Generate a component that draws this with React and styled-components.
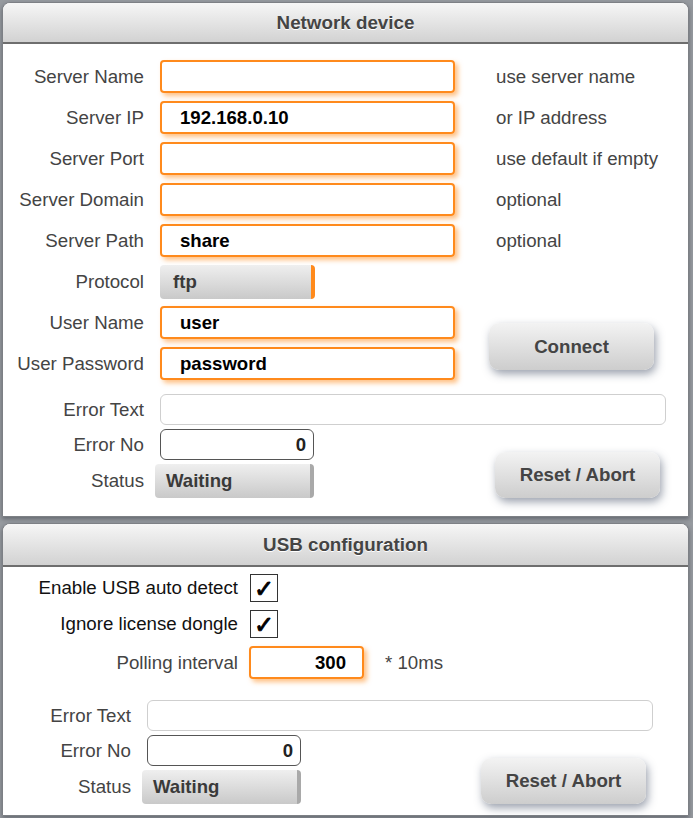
import React from 'react';
import styled, { createGlobalStyle } from 'styled-components';

const GlobalStyle = createGlobalStyle`
  html, body {
    margin: 0;
    padding: 0;
    background: #969a9f;
    font-family: "Liberation Sans", Arial, sans-serif;
  }
  * { box-sizing: border-box; }
`;

const Page = styled.div`
  width: 693px;
  height: 818px;
  padding: 2px 4px 0 2px;
  display: flex;
  flex-direction: column;
  gap: 6px;
  overflow: hidden;
`;

const Panel = styled.section`
  background: #fff;
  border: 1px solid #7d8085;
  border-radius: 8px 8px 0 0;
  box-shadow: 0 2px 4px rgba(40, 45, 55, 0.45);
  padding-bottom: ${(p) => p.$bottom}px;
`;

const Header = styled.div`
  height: ${(p) => p.$height}px;
  border-radius: 7px 7px 0 0;
  background: linear-gradient(#f6f6f6, #d2d2d2);
  border-bottom: 2px solid #6e6e6e;
  display: flex;
  align-items: center;
  justify-content: center;
  font-size: 18.8px;
  font-weight: bold;
  color: #444;
  text-shadow: 0 1px 0 #fff;
`;

const FieldGrid = styled.div`
  display: grid;
  grid-template-columns: 141px 295px 1fr;
  grid-auto-rows: 33px;
  column-gap: 16px;
  row-gap: 8px;
  padding-top: ${(p) => p.$top}px;
`;

const Label = styled.div`
  display: flex;
  align-items: center;
  justify-content: flex-end;
  font-size: 18.7px;
  color: ${(p) => (p.$dark ? '#111' : '#444')};
  white-space: nowrap;
`;

const Hint = styled.div`
  display: flex;
  align-items: center;
  padding-left: ${(p) => p.$pad || 25}px;
  font-size: 18.7px;
  color: #444;
  white-space: nowrap;
`;

const TextInput = styled.div`
  height: 33px;
  width: ${(p) => (p.$width ? `${p.$width}px` : '100%')};
  border: 2px solid #ff8a1c;
  border-radius: 4px;
  box-shadow: 3px 3px 5px rgba(255, 140, 30, 0.55);
  display: flex;
  align-items: center;
  justify-content: ${(p) => (p.$right ? 'flex-end' : 'flex-start')};
  padding: ${(p) => (p.$right ? '0 16px 0 0' : '0 0 0 18px')};
  font-size: 18.6px;
  font-weight: bold;
  color: #000;
`;

const Select = styled.div`
  height: ${(p) => p.$height || 34}px;
  width: ${(p) => p.$width}px;
  margin-left: ${(p) => p.$shift || 0}px;
  border-radius: 4px;
  background: linear-gradient(#efefef, #c9c9c9);
  border-right: 4px solid ${(p) => p.$accent};
  display: flex;
  align-items: center;
  padding-left: ${(p) => p.$pad}px;
  font-size: 18.6px;
  font-weight: bold;
  color: #3a3a3a;
`;

const Button = styled.button`
  width: 165px;
  height: ${(p) => p.$height}px;
  margin-left: ${(p) => p.$left}px;
  margin-top: ${(p) => p.$top || 0}px;
  align-self: ${(p) => p.$align || 'start'};
  border: none;
  border-radius: 10px;
  background: linear-gradient(#f3f3f3, #cdcdcd);
  box-shadow: 2px 4px 9px rgba(60, 72, 95, 0.5);
  font-family: inherit;
  font-size: 18.7px;
  font-weight: bold;
  color: #444;
  cursor: pointer;
`;

const ConnectButton = styled(Button)`
  grid-column: 3;
  grid-row: 7 / 9;
`;

const ErrorGrid = styled.div`
  display: grid;
  grid-template-columns: ${(p) => p.$label}px 154px 1fr;
  grid-template-rows: 31px 31px 34px;
  column-gap: 16px;
  row-gap: 4px;
  margin-top: ${(p) => p.$top}px;
`;

const Box = styled.div`
  height: 31px;
  border: 1px solid ${(p) => (p.$strong ? '#555' : '#cfcfcf')};
  border-radius: 6px;
  display: flex;
  align-items: center;
  justify-content: flex-end;
  padding-right: 7px;
  font-size: 18.6px;
  font-weight: bold;
  color: #222;
`;

const WideBox = styled(Box)`
  grid-column: 2 / 4;
  width: 506px;
`;

const ResetButton = styled(Button)`
  grid-column: 3;
  grid-row: 2 / 4;
`;

const CheckGrid = styled.div`
  display: grid;
  grid-template-columns: 235px 115px 1fr;
  column-gap: 11px;
  row-gap: 8px;
  padding-top: 7px;
`;

const Check = styled.div`
  width: 28px;
  height: 28px;
  margin-left: 1px;
  border: 1px solid #333;
  background: #fff;
  display: flex;
  align-items: center;
  justify-content: center;
  font-family: "DejaVu Sans", sans-serif;
  font-size: 24px;
  font-weight: bold;
  color: #000;
  -webkit-text-stroke: 0.9px #000;
  padding-top: 2px;
`;

function ErrorBlock({ label, top, resetLeft }) {
  return (
    <ErrorGrid $label={label} $top={top}>
      <Label>Error Text</Label>
      <WideBox />
      <Label>Error No</Label>
      <Box $strong>0</Box>
      <ResetButton $height={46} $left={resetLeft} $align="end">Reset / Abort</ResetButton>
      <Label>Status</Label>
      <Select $width={159} $shift={-5} $pad={11} $accent="#a9a9a9">Waiting</Select>
    </ErrorGrid>
  );
}

const serverRows = [
  ['Server Name', '', 'use server name'],
  ['Server IP', '192.168.0.10', 'or IP address'],
  ['Server Port', '', 'use default if empty'],
  ['Server Domain', '', 'optional'],
  ['Server Path', 'share', 'optional'],
];

export default function App() {
  return (
    <>
      <GlobalStyle />
      <Page>
        <Panel $bottom={18}>
          <Header $height={41}>Network device</Header>
          <FieldGrid $top={16}>
            {serverRows.map(([label, value, hint]) => (
              <React.Fragment key={label}>
                <Label>{label}</Label>
                <TextInput>{value}</TextInput>
                <Hint>{hint}</Hint>
              </React.Fragment>
            ))}
            <Label>Protocol</Label>
            <Select $width={155} $pad={13} $accent="#ff8a1c">ftp</Select>
            <div />
            <Label>User Name</Label>
            <TextInput>user</TextInput>
            <ConnectButton $height={47} $left={18} $top={17}>Connect</ConnectButton>
            <Label>User Password</Label>
            <TextInput>password</TextInput>
          </FieldGrid>
          <ErrorBlock label={141} top={14} resetLeft={165} />
        </Panel>

        <Panel $bottom={11}>
          <Header $height={43}>USB configuration</Header>
          <CheckGrid>
            <Label $dark>Enable USB auto detect</Label>
            <Check>✓</Check>
            <div />
            <Label $dark>Ignore license dongle</Label>
            <Check>✓</Check>
            <div />
            <Label>Polling interval</Label>
            <TextInput $right>300</TextInput>
            <Hint $pad={10}>* 10ms</Hint>
          </CheckGrid>
          <ErrorBlock label={128} top={21} resetLeft={164} />
        </Panel>
      </Page>
    </>
  );
}
